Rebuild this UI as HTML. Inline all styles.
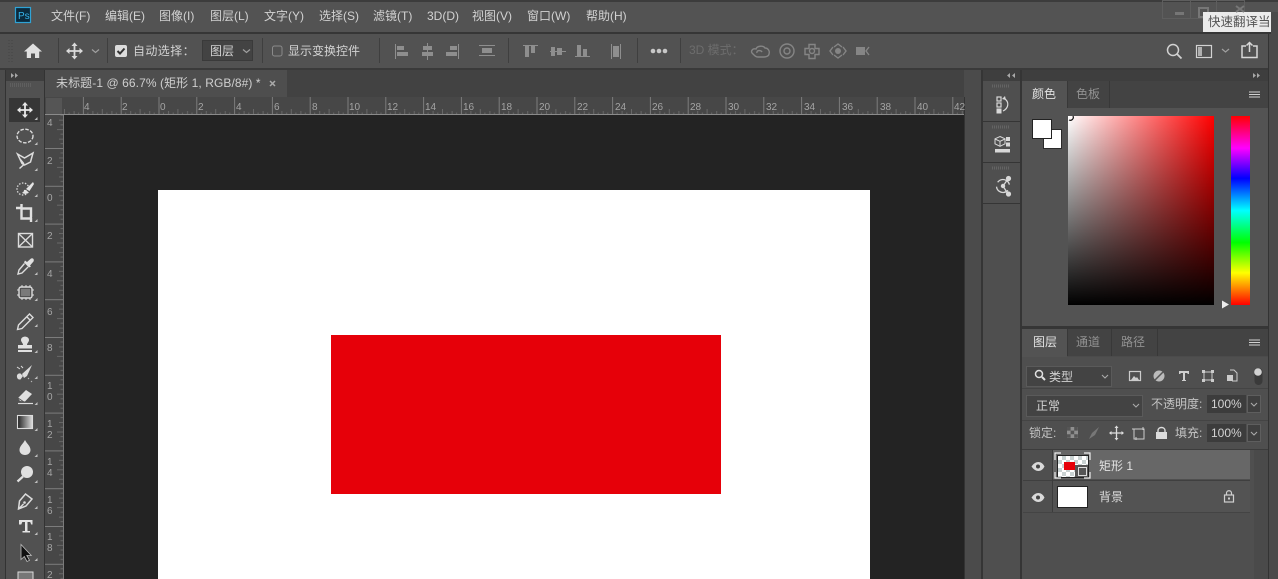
<!DOCTYPE html>
<html><head><meta charset="utf-8">
<style>
html,body{margin:0;padding:0;background:#4b4b4b;}
#r{position:relative;width:1278px;height:579px;overflow:hidden;background:#4b4b4b;font-family:"Liberation Sans","Noto Sans CJK SC",sans-serif;color:#d2d2d2;font-size:12px;}
#r div{position:absolute;}
.t{white-space:nowrap;line-height:16px;}
svg{position:absolute;left:0;top:0;}
</style></head><body><div id="r">
<!-- backgrounds -->
<div style="left:0;top:0;width:1278px;height:32px;background:#535353"></div>
<div style="left:0;top:0;width:1278px;height:2px;background:#3c3c3c"></div>
<div style="left:0;top:32px;width:1278px;height:2px;background:#363636"></div>
<div style="left:0;top:34px;width:1278px;height:34px;background:#525252"></div>
<div style="left:0;top:68px;width:1278px;height:2px;background:#3a3a3a"></div>
<div style="left:0;top:70px;width:982px;height:27px;background:#424242"></div>
<div style="left:45px;top:70px;width:242px;height:27px;background:#4e4e4e"></div>
<div style="left:45px;top:97px;width:919px;height:18px;background:#474747"></div>
<div style="left:45px;top:97px;width:19px;height:482px;background:#474747"></div>
<div style="left:64px;top:115px;width:900px;height:464px;background:#232323"></div>
<div style="left:45px;top:114px;width:919px;height:1px;background:#8a8a8a"></div>
<div style="left:63px;top:115px;width:1px;height:464px;background:#7a7a7a"></div>
<div style="left:158px;top:190px;width:712px;height:389px;background:#fff"></div>
<div style="left:331px;top:335px;width:390px;height:159px;background:#e60009"></div>
<!-- left tools -->
<div style="left:0;top:70px;width:5px;height:509px;background:#4c4c4c"></div>
<div style="left:5px;top:70px;width:1px;height:509px;background:#333"></div>
<div style="left:6px;top:70px;width:38px;height:509px;background:#515151"></div>
<div style="left:6px;top:70px;width:38px;height:11px;background:#3e3e3e"></div>
<div style="left:44px;top:70px;width:1px;height:509px;background:#333"></div>
<div style="left:9px;top:98px;width:31px;height:24px;background:#363636"></div>
<!-- right side -->
<div style="left:964px;top:70px;width:17px;height:509px;background:#4b4b4b"></div>
<div style="left:964px;top:97px;width:1px;height:482px;background:#333"></div>
<div style="left:981px;top:70px;width:2px;height:509px;background:#353535"></div>
<div style="left:983px;top:70px;width:37px;height:509px;background:#4f4f4f"></div>
<div style="left:983px;top:70px;width:37px;height:11px;background:#3e3e3e"></div>
<div style="left:983px;top:121px;width:37px;height:1px;background:#353535"></div>
<div style="left:983px;top:162px;width:37px;height:1px;background:#353535"></div>
<div style="left:983px;top:203px;width:37px;height:1px;background:#353535"></div>
<div style="left:1020px;top:70px;width:2px;height:509px;background:#353535"></div>
<div style="left:1022px;top:70px;width:246px;height:11px;background:#3e3e3e"></div>
<div style="left:1022px;top:81px;width:246px;height:27px;background:#434343"></div>
<div style="left:1022px;top:108px;width:246px;height:218px;background:#535353"></div>
<div style="left:1022px;top:81px;width:45px;height:28px;background:#535353"></div>
<div style="left:1067px;top:81px;width:1px;height:27px;background:#383838"></div>
<div style="left:1109px;top:81px;width:1px;height:27px;background:#383838"></div>
<div style="left:1022px;top:326px;width:246px;height:3px;background:#363636"></div>
<div style="left:1022px;top:329px;width:246px;height:27px;background:#434343"></div>
<div style="left:1022px;top:329px;width:45px;height:28px;background:#535353"></div>
<div style="left:1067px;top:329px;width:1px;height:27px;background:#383838"></div>
<div style="left:1111px;top:329px;width:1px;height:27px;background:#383838"></div>
<div style="left:1157px;top:329px;width:1px;height:27px;background:#383838"></div>
<div style="left:1022px;top:357px;width:246px;height:222px;background:#4f4f4f"></div>
<div style="left:1022px;top:388px;width:246px;height:1px;background:#444"></div>
<div style="left:1022px;top:420px;width:246px;height:1px;background:#444"></div>
<div style="left:1022px;top:449px;width:246px;height:1px;background:#3c3c3c"></div>
<div style="left:1268px;top:34px;width:1px;height:545px;background:#333"></div>
<div style="left:1269px;top:34px;width:9px;height:545px;background:#4a4a4a"></div>
<div style="left:1254px;top:450px;width:14px;height:129px;background:#4a4a4a"></div>
<!-- colour picker -->
<div style="left:1068px;top:116px;width:146px;height:189px;background:linear-gradient(to bottom,rgba(0,0,0,0),#000),linear-gradient(to right,#fff,#f00)"></div>
<div style="left:1231px;top:116px;width:19px;height:189px;background:linear-gradient(to bottom,#f00 0%,#f0f 17%,#00f 33%,#0ff 50%,#0f0 67%,#ff0 83%,#f00 100%)"></div>
<div style="left:1043px;top:129px;width:17px;height:18px;background:#fff;border:1px solid #2a2a2a"></div>
<div style="left:1032px;top:119px;width:18px;height:18px;background:#fff;border:1px solid #222"></div>
<!-- layers rows -->
<div style="left:1053px;top:450px;width:197px;height:29px;background:#676767"></div>
<div style="left:1023px;top:480px;width:227px;height:1px;background:#3f3f3f"></div>
<div style="left:1053px;top:481px;width:197px;height:31px;background:#535353"></div>
<div style="left:1023px;top:512px;width:227px;height:1px;background:#444"></div>
<div style="left:1052px;top:450px;width:1px;height:62px;background:#3c3c3c"></div>
<div style="left:1057px;top:486px;width:29px;height:20px;background:#fff;border:1px solid #222"></div>
<div style="left:1057px;top:455px;width:30px;height:21px;background:repeating-conic-gradient(#c9d2d2 0% 25%,#fff 0% 50%) 0 0/8px 8px;border:1px solid #222"></div>
<div style="left:1064px;top:462px;width:11px;height:8px;background:#e60009"></div>
<div style="left:1075px;top:465px;width:13px;height:12px;background:#555"></div>
<!-- inputs -->
<div style="left:202px;top:40px;width:51px;height:21px;background:#434343;border:1px solid #3a3a3a;box-sizing:border-box"></div>
<div style="left:1026px;top:366px;width:86px;height:21px;background:#434343;border:1px solid #5a5a5a;box-sizing:border-box"></div>
<div style="left:1026px;top:395px;width:117px;height:22px;background:#434343;border:1px solid #5a5a5a;box-sizing:border-box"></div>
<div style="left:1207px;top:395px;width:39px;height:18px;background:#3c3c3c"></div>
<div style="left:1247px;top:395px;width:14px;height:18px;background:#3f3f3f;border:1px solid #5e5e5e;box-sizing:border-box"></div>
<div style="left:1207px;top:424px;width:39px;height:18px;background:#3c3c3c"></div>
<div style="left:1247px;top:424px;width:14px;height:18px;background:#3f3f3f;border:1px solid #5e5e5e;box-sizing:border-box"></div>
<!-- window buttons + tooltip -->
<div style="left:1162px;top:0;width:83px;height:19px;border:1px solid #5e5e5e;box-sizing:border-box"></div>
<div style="left:1190px;top:0;width:1px;height:19px;background:#5e5e5e"></div>
<div style="left:1216px;top:0;width:1px;height:19px;background:#5e5e5e"></div>
<div style="left:1175px;top:12px;width:9px;height:3px;background:#767676"></div>
<div style="left:1198px;top:7px;width:7px;height:7px;border:2px solid #777"></div>
<div class="t" style="left:1203px;top:12px;width:68px;height:20px;background:#ebebeb;color:#555;padding-left:5px;line-height:20px;font-size:12.5px;overflow:hidden;box-sizing:border-box">快速翻译当前</div>
<div style="left:1271px;top:12px;width:7px;height:22px;background:#4a4a4a"></div>
<!-- menu text -->
<div class="t" style="left:51px;top:8px">文件(F)</div>
<div class="t" style="left:105px;top:8px">编辑(E)</div>
<div class="t" style="left:159px;top:8px">图像(I)</div>
<div class="t" style="left:210px;top:8px">图层(L)</div>
<div class="t" style="left:264px;top:8px">文字(Y)</div>
<div class="t" style="left:319px;top:8px">选择(S)</div>
<div class="t" style="left:373px;top:8px">滤镜(T)</div>
<div class="t" style="left:427px;top:8px">3D(D)</div>
<div class="t" style="left:472px;top:8px">视图(V)</div>
<div class="t" style="left:527px;top:8px">窗口(W)</div>
<div class="t" style="left:586px;top:8px">帮助(H)</div>
<!-- options text -->
<div class="t" style="left:133px;top:43px;letter-spacing:.4px">自动选择：</div>
<div class="t" style="left:210px;top:43px">图层</div>
<div class="t" style="left:288px;top:43px">显示变换控件</div>
<div class="t" style="left:689px;top:42px;color:#6d6d6d">3D 模式：</div>
<div class="t" style="left:56px;top:75px;color:#cfcfcf;letter-spacing:.08px">未标题-1 @ 66.7% (矩形 1, RGB/8#) *</div>
<!-- panels text -->
<div class="t" style="left:1032px;top:86px;color:#e2e2e2">颜色</div>
<div class="t" style="left:1076px;top:86px;color:#929292">色板</div>
<div class="t" style="left:1033px;top:334px;color:#e2e2e2">图层</div>
<div class="t" style="left:1076px;top:334px;color:#929292">通道</div>
<div class="t" style="left:1121px;top:334px;color:#929292">路径</div>
<div class="t" style="left:1049px;top:369px">类型</div>
<div class="t" style="left:1036px;top:398px">正常</div>
<div class="t" style="left:1151px;top:396px;color:#c4c4c4">不透明度:</div>
<div class="t" style="left:1211px;top:396px;font-size:12px">100%</div>
<div class="t" style="left:1029px;top:425px;color:#c4c4c4">锁定:</div>
<div class="t" style="left:1175px;top:425px;color:#c4c4c4">填充:</div>
<div class="t" style="left:1211px;top:425px;font-size:12px">100%</div>
<div class="t" style="left:1099px;top:458px;color:#e2e2e2">矩形 1</div>
<div class="t" style="left:1099px;top:489px;color:#dcdcdc">背景</div>

<svg width="1278" height="579" viewBox="0 0 1278 579" fill="none">
<defs>
<pattern id="hr" x="45.1" y="97" width="37.8" height="18" patternUnits="userSpaceOnUse">
<path d="M.5 0V18" stroke="#7c7c7c"/>
<path d="M19.4 12V18M10 14V18M29 14V18M5 15.500V18M14.700 15.500V18M24 15.500V18M33.500 15.500V18" stroke="#686868"/>
</pattern>
<pattern id="vr" x="45" y="-3.2" width="18" height="37.8" patternUnits="userSpaceOnUse">
<path d="M0 .5H18" stroke="#7c7c7c"/>
<path d="M12 19.400H18M14 10H18M14 29H18M15.500 5H18M15.500 14.700H18M15.500 24H18M15.500 33.500H18" stroke="#686868"/>
</pattern>
<linearGradient id="g"><stop offset="0" stop-color="#222"/><stop offset="1" stop-color="#ddd"/></linearGradient>
</defs>
<rect x="64" y="97" width="900" height="17" fill="url(#hr)"/>
<rect x="45" y="115" width="18" height="464" fill="url(#vr)"/>
<rect x="46" y="98" width="16" height="16" fill="#555"/>
<g font-family="Liberation Sans,sans-serif" font-size="10" fill="#a4a4a4">
<text x="84" y="110">4</text><text x="122" y="110">2</text><text x="160" y="110">0</text><text x="198" y="110">2</text><text x="236" y="110">4</text><text x="274" y="110">6</text><text x="312" y="110">8</text><text x="349" y="110">10</text><text x="387" y="110">12</text><text x="425" y="110">14</text><text x="463" y="110">16</text><text x="501" y="110">18</text><text x="539" y="110">20</text><text x="577" y="110">22</text><text x="615" y="110">24</text><text x="652" y="110">26</text><text x="690" y="110">28</text><text x="728" y="110">30</text><text x="766" y="110">32</text><text x="804" y="110">34</text><text x="842" y="110">36</text><text x="880" y="110">38</text><text x="917" y="110">40</text><text x="954" y="110">42</text>
<text x="47" y="126">4</text><text x="47" y="164">2</text><text x="47" y="201">0</text><text x="47" y="239">2</text><text x="47" y="277">4</text><text x="47" y="315">6</text><text x="47" y="351">8</text><text x="47" y="389">1</text><text x="47" y="400">0</text><text x="47" y="427">1</text><text x="47" y="438">2</text><text x="47" y="465">1</text><text x="47" y="476">4</text><text x="47" y="503">1</text><text x="47" y="514">6</text><text x="47" y="540">1</text><text x="47" y="551">8</text><text x="47" y="578">2</text>
</g>
<!-- PS logo -->
<rect x="15.500" y="7.500" width="15" height="15" fill="#0b2a3d" stroke="#2fa3d6" stroke-width="1.200"/>
<text x="18" y="19" font-family="Liberation Sans,sans-serif" font-size="10" fill="#35b4ea">Ps</text>
<!-- close X behind tooltip -->
<path d="M1236 6l8 6M1244 6l-8 6" stroke="#777" stroke-width="2"/>
<!-- options separators -->
<path d="M58.500 38V63M107.500 38V63M262.500 38V63M379.500 38V63M508.500 38V63M637.500 38V63M680.500 38V63" stroke="#3f3f3f"/>
<path d="M9 40V62M12 40V62" stroke="#444" stroke-dasharray="1 2"/>
<!-- home -->
<path d="M33 43.500l-9 8h2.800v6.500h4.200v-4.500h4v4.500h4.200v-6.500h2.800z" fill="#e0e0e0"/>
<!-- move icon options -->
<path d="M74.500 44.500V57.500M67.500 51H81.500" stroke="#dadada" stroke-width="1.800"/>
<path d="M74.500 42.500l-3 3.500h6zM74.500 59.500l-3-3.500h6zM66 51l3.500-3v6zM83 51l-3.500-3v6z" fill="#dadada"/>
<path d="M92 49.500l3.500 3 3.500-3" stroke="#a0a0a0" stroke-width="1.200"/>
<!-- checkbox -->
<rect x="115" y="45" width="12" height="12" rx="2" fill="#dcdcdc"/>
<path d="M117.500 51l2.500 2.500 4.500-5" stroke="#333" stroke-width="2"/>
<path d="M243 49.500l3.500 3 3.500-3" stroke="#a0a0a0" stroke-width="1.200"/>
<rect x="272.500" y="46" width="9.500" height="10" rx="2" stroke="#8a8a8a"/>
<!-- align icons -->
<g fill="#8e8e8e">
<path d="M395 44h1v15h-1zM397 46h7v4h-7zM397 52h11v4h-11z"/>
<path d="M427 43h1v17h-1zM423 46h9v4h-9zM422 52h11v4h-11z"/>
<path d="M458 44h1v15h-1zM450 46h7v4h-7zM446 52h11v4h-11z"/>
<path d="M479 45h16v1h-16zM479 55h16v1h-16zM482 48h10v5h-10z"/>
<path d="M523 45h15v1h-15zM525 46h4v11h-4zM531 46h4v7h-4z"/>
<path d="M550 51h16v1h-16zM551 47h4v9h-4zM557 48h5v7h-5z"/>
<path d="M575 56h15v1h-15zM577 45h4v11h-4zM583 49h4v7h-4z"/>
<path d="M611 44h1v15h-1zM620 44h1v15h-1zM613 46h6v11h-6z"/>
</g>
<g fill="#c8c8c8"><circle cx="653" cy="51" r="2.300"/><circle cx="659" cy="51" r="2.300"/><circle cx="665" cy="51" r="2.300"/></g>
<!-- 3D icons -->
<g stroke="#858585" stroke-width="1.400">
<path d="M753 54c-3-2-1-6 3-5 1-3 7-4 9-1 3 0 5 3 4 6 0 2-3 3-5 3h-6c-2 0-3-1-5-3z"/>
<path d="M757 53c-1-3 4-3 5-1"/>
<circle cx="787" cy="51" r="7"/><circle cx="787" cy="51" r="3"/>
<path d="M809 44.500h6v4h4v6h-4v4h-6v-4h-4v-6h4z"/>
<circle cx="812" cy="51" r="2.500"/>
<path d="M834 47l4-3 4 3M834 55l4 3 4-3M833 47l-3 4 3 4M843 47l3 4-3 4"/>
<path d="M869 47l-3 4 3 4"/>
</g>
<rect x="856" y="47" width="9" height="8" fill="#858585"/>
<circle cx="838" cy="51" r="3" fill="#858585"/>
<!-- right options -->
<circle cx="1173" cy="50" r="5.500" stroke="#d2d2d2" stroke-width="1.500"/><path d="M1177 54l4.500 4.500" stroke="#d2d2d2" stroke-width="1.800"/>
<rect x="1196.500" y="45.500" width="15" height="12" stroke="#d2d2d2" stroke-width="1.200"/><rect x="1198" y="47" width="4" height="9" fill="#b0b0b0"/>
<path d="M1222 49l3.500 3 3.500-3" stroke="#a0a0a0" stroke-width="1.200"/>
<path d="M1246 46h-4v11.500h15V46h-4M1249.500 52V43M1246.500 45.500l3-3 3 3" stroke="#d8d8d8" stroke-width="1.500"/>
<!-- collapse arrows -->
<g fill="#a8a8a8">
<path d="M11 73l3 2.500-3 2.500zM15 73l3 2.500-3 2.500z"/>
<path d="M1010 73l-3 2.500 3 2.500zM1015 73l-3 2.500 3 2.500z"/>
<path d="M1253 73l3 2.500-3 2.500zM1257 73l3 2.500-3 2.500z"/>
</g>
<path d="M270 81l5 5M275 81l-5 5" stroke="#aaa" stroke-width="1.500"/>
<path d="M10 85H32" stroke="#5f5f5f" stroke-width="4" stroke-dasharray="1 1"/>
<path d="M992 86H1010M992 127H1010M992 168H1010" stroke="#646464" stroke-width="3" stroke-dasharray="1 1"/>
<!-- TOOLS -->
<!-- move -->
<path d="M25 104.500V115.500M19 110H31" stroke="#e8e8e8" stroke-width="1.800"/>
<path d="M25 102l-3 3.500h6zM25 118l-3-3.500h6zM17 110l3.500-3v6zM33 110l-3.500-3v6z" fill="#e8e8e8"/>
<!-- marquee -->
<ellipse cx="25" cy="136" rx="8" ry="6.800" stroke="#dcdcdc" stroke-width="1.400" stroke-dasharray="3.500 1.500"/>
<!-- lasso -->
<path d="M17.500 154l7 4 8.500-5-2.500 9-6 3-2.500-1.500zM24 164.500l-4.500 4M20 159l4 5" stroke="#dcdcdc" stroke-width="1.500"/>
<!-- quick select -->
<circle cx="23" cy="189" r="6" stroke="#dcdcdc" stroke-width="1.300" stroke-dasharray="1.500 1.500"/>
<path d="M26 189l7-7 1 2-4.500 7zM24 190c2-.5 4 1 4 3-2 1.500-5 1-6-.5 1 0 2-1 2-2.500z" fill="#e4e4e4"/>
<!-- crop -->
<path d="M16 208h5.500v10.500H32M21.500 204v4M21.500 208.500h9.500v9M31 218v4" stroke="#e0e0e0" stroke-width="2.400"/>
<!-- frame -->
<rect x="18.500" y="233.500" width="14" height="13.500" stroke="#dcdcdc" stroke-width="1.400"/><path d="M18.500 233.500l14 13.500M32.500 233.500l-14 13.500" stroke="#dcdcdc" stroke-width="1.300"/>
<!-- eyedropper -->
<path d="M27 262l4-3.500c2-1 3.500 1 2.500 3l-3.500 4 1 1-2 1-5-5 1-2z" fill="#e0e0e0"/>
<path d="M24.500 263.500l-5.500 6.500-1 4 4-1 6-6" stroke="#dcdcdc" stroke-width="1.400"/>
<!-- patch/artboard -->
<rect x="19" y="287" width="13" height="11" rx="2" stroke="#dcdcdc" stroke-width="1.400"/>
<rect x="21" y="289" width="9" height="7" fill="#7a7a7a"/>
<path d="M22 285v2M26 285v2M30 285v2M22 298v2M26 298v2M30 298v2M17 290h2M17 295h2M32 290h2M32 295h2" stroke="#dcdcdc"/>
<!-- pencil -->
<path d="M18.500 325l-1 4.500 4.500-1 11-11-3.500-3.500zM27 317l3.500 3.500" stroke="#dcdcdc" stroke-width="1.400"/>
<!-- stamp -->
<path d="M21 340c0-4.500 8-4.500 8 0 0 2-2 3-2 5h5v3.500H18V345h5c0-2-2-3-2-5zM18 350h14v2H18z" fill="#e0e0e0"/>
<!-- history brush -->
<path d="M17 377c-.5-2.500 1.500-4 3.500-3.500l2.500 2.500-2.500 3.500c-1.500 0-3 0-3.500-2.500zM22 374l10-9-5 11-3 2z" fill="#dcdcdc"/>
<path d="M17 367l3 2M21 366l2 2" stroke="#dcdcdc"/>
<path d="M28 378l1 1M31 381l1 1" stroke="#bbb"/>
<!-- eraser -->
<path d="M18 398l8-8 6 4-7 7.500-5-.5z" fill="#e0e0e0"/><path d="M18 403.500h15" stroke="#dcdcdc" stroke-width="1.200"/><path d="M18 398l6 4" stroke="#555"/>
<!-- gradient -->
<rect x="17.500" y="415.500" width="15" height="13" fill="url(#g)" stroke="#dcdcdc" stroke-width="1.100"/>
<!-- drop -->
<path d="M25 440c-2 4-5.500 6-5.500 10 0 3 2.500 5 5.500 5s5.500-2 5.500-5c0-4-3.500-6-5.500-10z" fill="#e0e0e0"/>
<!-- sponge/dodge -->
<circle cx="27" cy="472" r="6" fill="#e0e0e0"/><path d="M23 476.500l-5.500 5" stroke="#e0e0e0" stroke-width="2.200"/>
<!-- pen -->
<path d="M18.500 509l1-8 6-7 6.500 5-6 7zM18.500 509l5-5" stroke="#dcdcdc" stroke-width="1.500"/><circle cx="24.500" cy="502.500" r="1.300" fill="#dcdcdc"/>
<!-- type -->
<path d="M19 520h13.500v4.500h-1.300l-1-2.500h-2.700v9h2.500v1.500h-7.500V531h2.500v-9h-2.700l-1 2.500H19z" fill="#e4e4e4"/>
<!-- direct select -->
<path d="M21 544.500v15l3.300-3 2.700 5 2.500-1.200-2.700-4.800h4.500z" fill="#111" stroke="#bdbdbd" stroke-width=".8"/>
<!-- shape -->
<rect x="18" y="572" width="15" height="10" fill="#777" stroke="#ddd"/>
<!-- tool corner triangles -->
<g fill="#c0c0c0">
<path d="M34.500 120l3-3v3zM34.500 145l3-3v3zM34.500 171l3-3v3zM34.500 197l3-3v3zM34.500 222l3-3v3zM34.500 275l3-3v3zM34.500 301l3-3v3zM34.500 327l3-3v3zM34.500 353l3-3v3zM34.500 379l3-3v3zM34.500 405l3-3v3zM34.500 431l3-3v3zM34.500 457l3-3v3zM34.500 483l3-3v3zM34.500 509l3-3v3zM34.500 535l3-3v3zM34.500 561l3-3v3z"/>
</g>
<!-- right dock icons -->
<g stroke="#d8d8d8" stroke-width="1.200">
<rect x="997" y="97" width="4" height="4"/><rect x="997" y="103" width="4" height="4"/>
<path d="M1005 99c4 3 4 9-2 12"/>
</g>
<rect x="996.500" y="108.500" width="5" height="5" fill="#d8d8d8"/>
<path d="M1002 99l3-3 1 4z" fill="#d8d8d8"/>
<path d="M1000 136.500l5 2.300v5l-5 2.500-5-2.500v-5zM995 139l5 2.300 5-2.300M1000 141.300v5" stroke="#d8d8d8"/>
<path d="M1006 137h4v4h-4zM1006 142.500h4v4h-4zM995 149h15v3.500h-15z" fill="#d8d8d8"/>
<circle cx="1003" cy="186" r="6.500" stroke="#d8d8d8" stroke-width="1.300" stroke-dasharray="15 6" transform="rotate(-145 1003 186)"/>
<circle cx="1003" cy="186" r="2.200" fill="#d8d8d8"/>
<path d="M1003 186l5-7M1003 186l5 8" stroke="#d8d8d8" stroke-width="1.300"/>
<circle cx="1008.500" cy="178.500" r="2.600" fill="#d8d8d8"/><circle cx="1008.500" cy="194" r="2.600" fill="#d8d8d8"/>
<!-- menus -->
<path d="M1249 92h11M1249 94.500h11M1249 97h11M1249 340h11M1249 342.500h11M1249 345h11" stroke="#d2d2d2"/>
<path d="M1069 120a3 3 0 0 0 4-4" stroke="#111" stroke-width="1.200"/>
<path d="M1222 300.500l7 4-7 4z" fill="#ededed"/>
<!-- layer panel icons -->
<circle cx="1039" cy="374" r="3.500" stroke="#e0e0e0" stroke-width="1.500"/><path d="M1042 377l3 3" stroke="#e0e0e0" stroke-width="2"/>
<path d="M1102 375l3 3 3-3M1133 404l3 3 3-3M1251 403l3 3 3-3M1251 432l3 3 3-3" stroke="#aaa" stroke-width="1.100"/>
<rect x="1129.500" y="371.500" width="11" height="9" stroke="#ccc" stroke-width="1.200"/><path d="M1131 380l3-4 2 2 1-1 2 3z" fill="#ccc"/>
<circle cx="1159" cy="376" r="5.500" fill="#bbb"/><path d="M1163 372l-8 8" stroke="#555" stroke-width="1.500"/>
<path d="M1179 371h10v3h-1l-1-1h-2v7h1v1h-4v-1h1v-7h-2l-1 1h-1z" fill="#cfcfcf"/>
<rect x="1204" y="372" width="8" height="8" stroke="#ccc"/><path d="M1202 370h3v3h-3zM1211 370h3v3h-3zM1202 379h3v3h-3zM1211 379h3v3h-3z" fill="#ccc"/>
<path d="M1230 370h4l3 3v8h-5" stroke="#ccc"/><rect x="1227" y="375" width="6" height="6" fill="#ccc"/>
<rect x="1254.500" y="368" width="8" height="17" rx="4" fill="#3a3a3a"/><circle cx="1258" cy="372" r="3.800" fill="#d2d2d2"/>
<rect x="1067" y="427" width="11" height="11" fill="#8f8f8f"/>
<path d="M1067 427h3.600v3.600H1067zM1074.200 427h3.600v3.600h-3.600zM1070.600 430.600h3.600v3.600h-3.600zM1067 434.200h3.600v3.600H1067zM1074.200 434.200h3.600v3.600h-3.600z" fill="#555"/>
<path d="M1089 439l3-6 7-6-4 8z" fill="#777"/>
<path d="M1116.500 427V439M1110.500 433H1122.500" stroke="#ddd" stroke-width="1.300"/>
<path d="M1116.500 425.500l-2 2.500h4zM1116.500 440.500l-2-2.500h4zM1109 433l2.500-2v4zM1124 433l-2.500-2v4z" fill="#ddd"/>
<path d="M1134 429h10v10h-10zM1132 429h3M1143 427v3M1136 437v3" stroke="#ccc" stroke-width="1"/>
<rect x="1156" y="432" width="11" height="7" fill="#dcdcdc"/><path d="M1158 432.500v-2c0-4 7-4 7 0v2" stroke="#dcdcdc" stroke-width="1.400"/>
<!-- eye -->
<path d="M1031.500 466.500c4-6 10-6 13 0-3 6-9 6-13 0z" fill="#dadada"/><circle cx="1038" cy="466.500" r="2" fill="#444"/>
<path d="M1031.500 497.500c4-6 10-6 13 0-3 6-9 6-13 0z" fill="#dadada"/><circle cx="1038" cy="497.500" r="2" fill="#444"/>
<!-- thumbnail frame corners -->
<path d="M1055 460v-7h6M1084 453h6v7M1090 472v6h-6M1061 478h-6v-6" stroke="#eee" stroke-width="1.200"/>
<rect x="1078.500" y="467.500" width="8" height="8" stroke="#ddd"/>
<!-- bg lock -->
<rect x="1224.500" y="495" width="9" height="7" stroke="#cfcfcf" stroke-width="1.200"/><path d="M1226.500 495v-2c0-3 5-3 5 0v2" stroke="#cfcfcf" stroke-width="1.200"/><rect x="1228" y="497.500" width="2" height="2" fill="#cfcfcf"/>
</svg>
</div></body></html>
